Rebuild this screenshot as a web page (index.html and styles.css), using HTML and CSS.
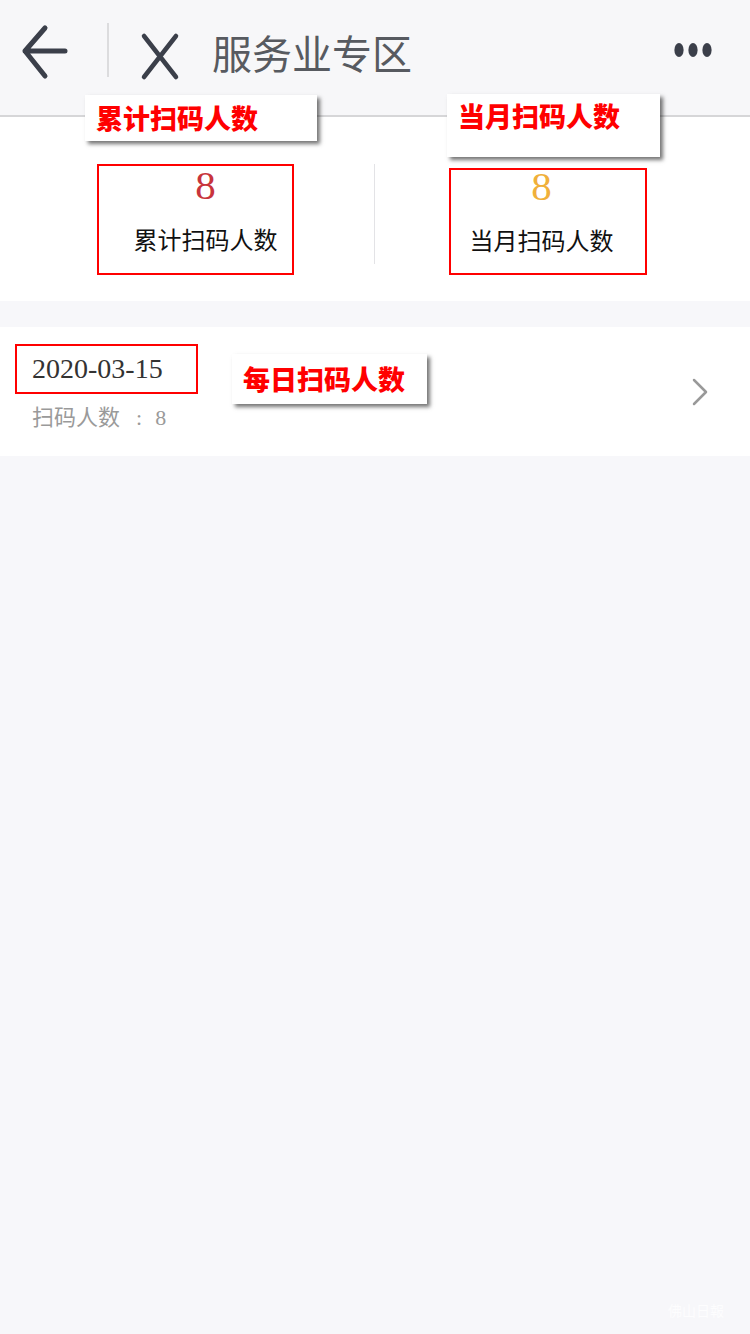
FILE: index.html
```html
<!DOCTYPE html>
<html lang="zh-CN">
<head>
  <meta charset="UTF-8">
  <meta name="viewport" content="width=device-width, initial-scale=1.0">
  <title>服务业专区</title>
  <link rel="stylesheet" href="styles.css">
</head>
<body>

<header class="nav">
  <svg class="nav-back" width="50" height="60" viewBox="0 0 50 60" aria-label="返回">
    <path d="M25 6 L5 29 L25 54 M5 29 L45 29" fill="none" stroke="#3b3f4a" stroke-width="5" stroke-linecap="round" stroke-linejoin="round"/>
  </svg>
  <span class="nav-sep"></span>
  <svg class="nav-close" width="44" height="52" viewBox="0 0 44 52" aria-label="关闭">
    <path d="M6 6 L38 47 M38 6 L6 47" fill="none" stroke="#3b3f4a" stroke-width="4.5" stroke-linecap="round"/>
  </svg>
  <h1 class="nav-title">服务业专区</h1>
  <svg class="nav-more" width="46" height="20" viewBox="0 0 46 20" aria-label="更多">
    <ellipse cx="9" cy="10" rx="4.6" ry="7" fill="#3b3f4a"/>
    <ellipse cx="23" cy="10" rx="4.6" ry="7" fill="#3b3f4a"/>
    <ellipse cx="37" cy="10" rx="4.6" ry="7" fill="#3b3f4a"/>
  </svg>
</header>

<section class="stats">
  <div class="stat-col">
    <div class="stat-box stat-total">
      <div class="stat-num">8</div>
      <div class="stat-label">累计扫码人数</div>
    </div>
  </div>
  <span class="stat-divider"></span>
  <div class="stat-col">
    <div class="stat-box stat-month">
      <div class="stat-num">8</div>
      <div class="stat-label">当月扫码人数</div>
    </div>
  </div>

  <div class="note note-total">累计扫码人数</div>
  <div class="note note-month">当月扫码人数</div>
</section>

<section class="day-list">
  <div class="day-row">
    <div class="day-info">
      <div class="day-date">2020-03-15</div>
      <div class="day-count">扫码人数<span class="day-colon">:</span><span class="day-num">8</span></div>
    </div>
    <svg class="day-arrow" width="20" height="30" viewBox="0 0 20 30">
      <path d="M4 3 L16 15 L4 27" fill="none" stroke="#999" stroke-width="2.5" stroke-linecap="round" stroke-linejoin="round"/>
    </svg>
    <div class="note note-day">每日扫码人数</div>
  </div>
</section>

<div class="watermark">佛山日報</div>

</body>
</html>
```

FILE: styles.css
```css
body {
  font-family: "Noto Sans CJK SC", "Noto Sans", sans-serif;
  background-color: #f7f7fa;
  margin: 0;
  width: 750px;
  min-height: 1334px;
  position: relative;
}
.nav {
  display: flex;
  align-items: flex-start;
  height: 93px;
  padding-top: 22px;
  background-color: #f7f7f9;
  border-bottom: 2px solid #d6d6d8;
  box-shadow: 0 2px 2px rgba(0, 0, 0, 0.06);
}
.nav-back {
  margin-left: 20px;
}
.nav-sep {
  width: 2px;
  height: 54px;
  margin: 1px 0 0 37px;
  background-color: #dcdcde;
}
.nav-close {
  margin: 8px 0 0 29px;
}
.nav-title {
  margin: 0 0 0 30px;
  font-size: 40px;
  font-weight: normal;
  line-height: 60px;
  color: #575a60;
}
.nav-more {
  margin: 18px 34px 0 auto;
}
.stats {
  position: relative;
  display: flex;
  height: 184px;
  background: white;
}
.stat-col {
  width: 374px;
}
.stat-col + .stat-divider + .stat-col {
  width: 375px;
}
.stat-divider {
  width: 1px;
  height: 100px;
  margin-top: 47px;
  background-color: #e3e3e6;
}
.stat-box {
  box-sizing: border-box;
  border: 2px solid #f00;
  text-align: center;
}
.stat-num {
  font-family: "Liberation Serif", serif;
  font-size: 41px;
  line-height: 32px;
}
.stat-label {
  margin-top: 22px;
  font-size: 24px;
  line-height: 32px;
  color: #111;
}
.stat-total {
  width: 197px;
  margin: 47px 0 0 97px;
  padding: 3px 0 18px 20px;
}
.stat-total .stat-num {
  color: #c8343c;
}
.stat-month {
  width: 198px;
  margin: 51px 0 0 74px;
  padding: 0 13px 17px 0;
}
.stat-month .stat-num {
  color: #f0b03a;
}
.note {
  position: absolute;
  box-sizing: border-box;
  padding-left: 11px;
  background: white;
  box-shadow: 3px 3px 4px rgba(0, 0, 0, 0.55);
  color: #f00;
  font-size: 27px;
  font-weight: 900;
  white-space: nowrap;
}
.note-total {
  left: 85px;
  top: -22px;
  width: 232px;
  height: 46px;
  line-height: 46px;
}
.note-month {
  left: 447px;
  top: -23px;
  width: 213px;
  height: 63px;
  line-height: 44px;
}
.day-list {
  margin-top: 26px;
  background: white;
}
.day-row {
  position: relative;
  display: flex;
  align-items: center;
  height: 129px;
}
.day-info {
  align-self: flex-start;
  margin: 17px 0 0 15px;
}
.day-date {
  box-sizing: border-box;
  width: 183px;
  height: 50px;
  padding-left: 15px;
  border: 2px solid #f00;
  font-family: "Liberation Serif", serif;
  font-size: 28px;
  line-height: 46px;
  color: #333;
}
.day-count {
  margin: 6px 0 0 17px;
  font-size: 22px;
  line-height: 30px;
  color: #9a9a9a;
}
.day-colon {
  margin-left: 16px;
  font-family: "Liberation Serif", serif;
}
.day-num {
  margin-left: 13px;
  font-family: "Liberation Serif", serif;
}
.day-arrow {
  margin: 0 40px 0 auto;
}
.note-day {
  left: 232px;
  top: 27px;
  width: 195px;
  height: 50px;
  line-height: 50px;
}
.watermark {
  position: absolute;
  right: 26px;
  bottom: 14px;
  font-size: 14px;
  color: #fdfdfe;
}
```
